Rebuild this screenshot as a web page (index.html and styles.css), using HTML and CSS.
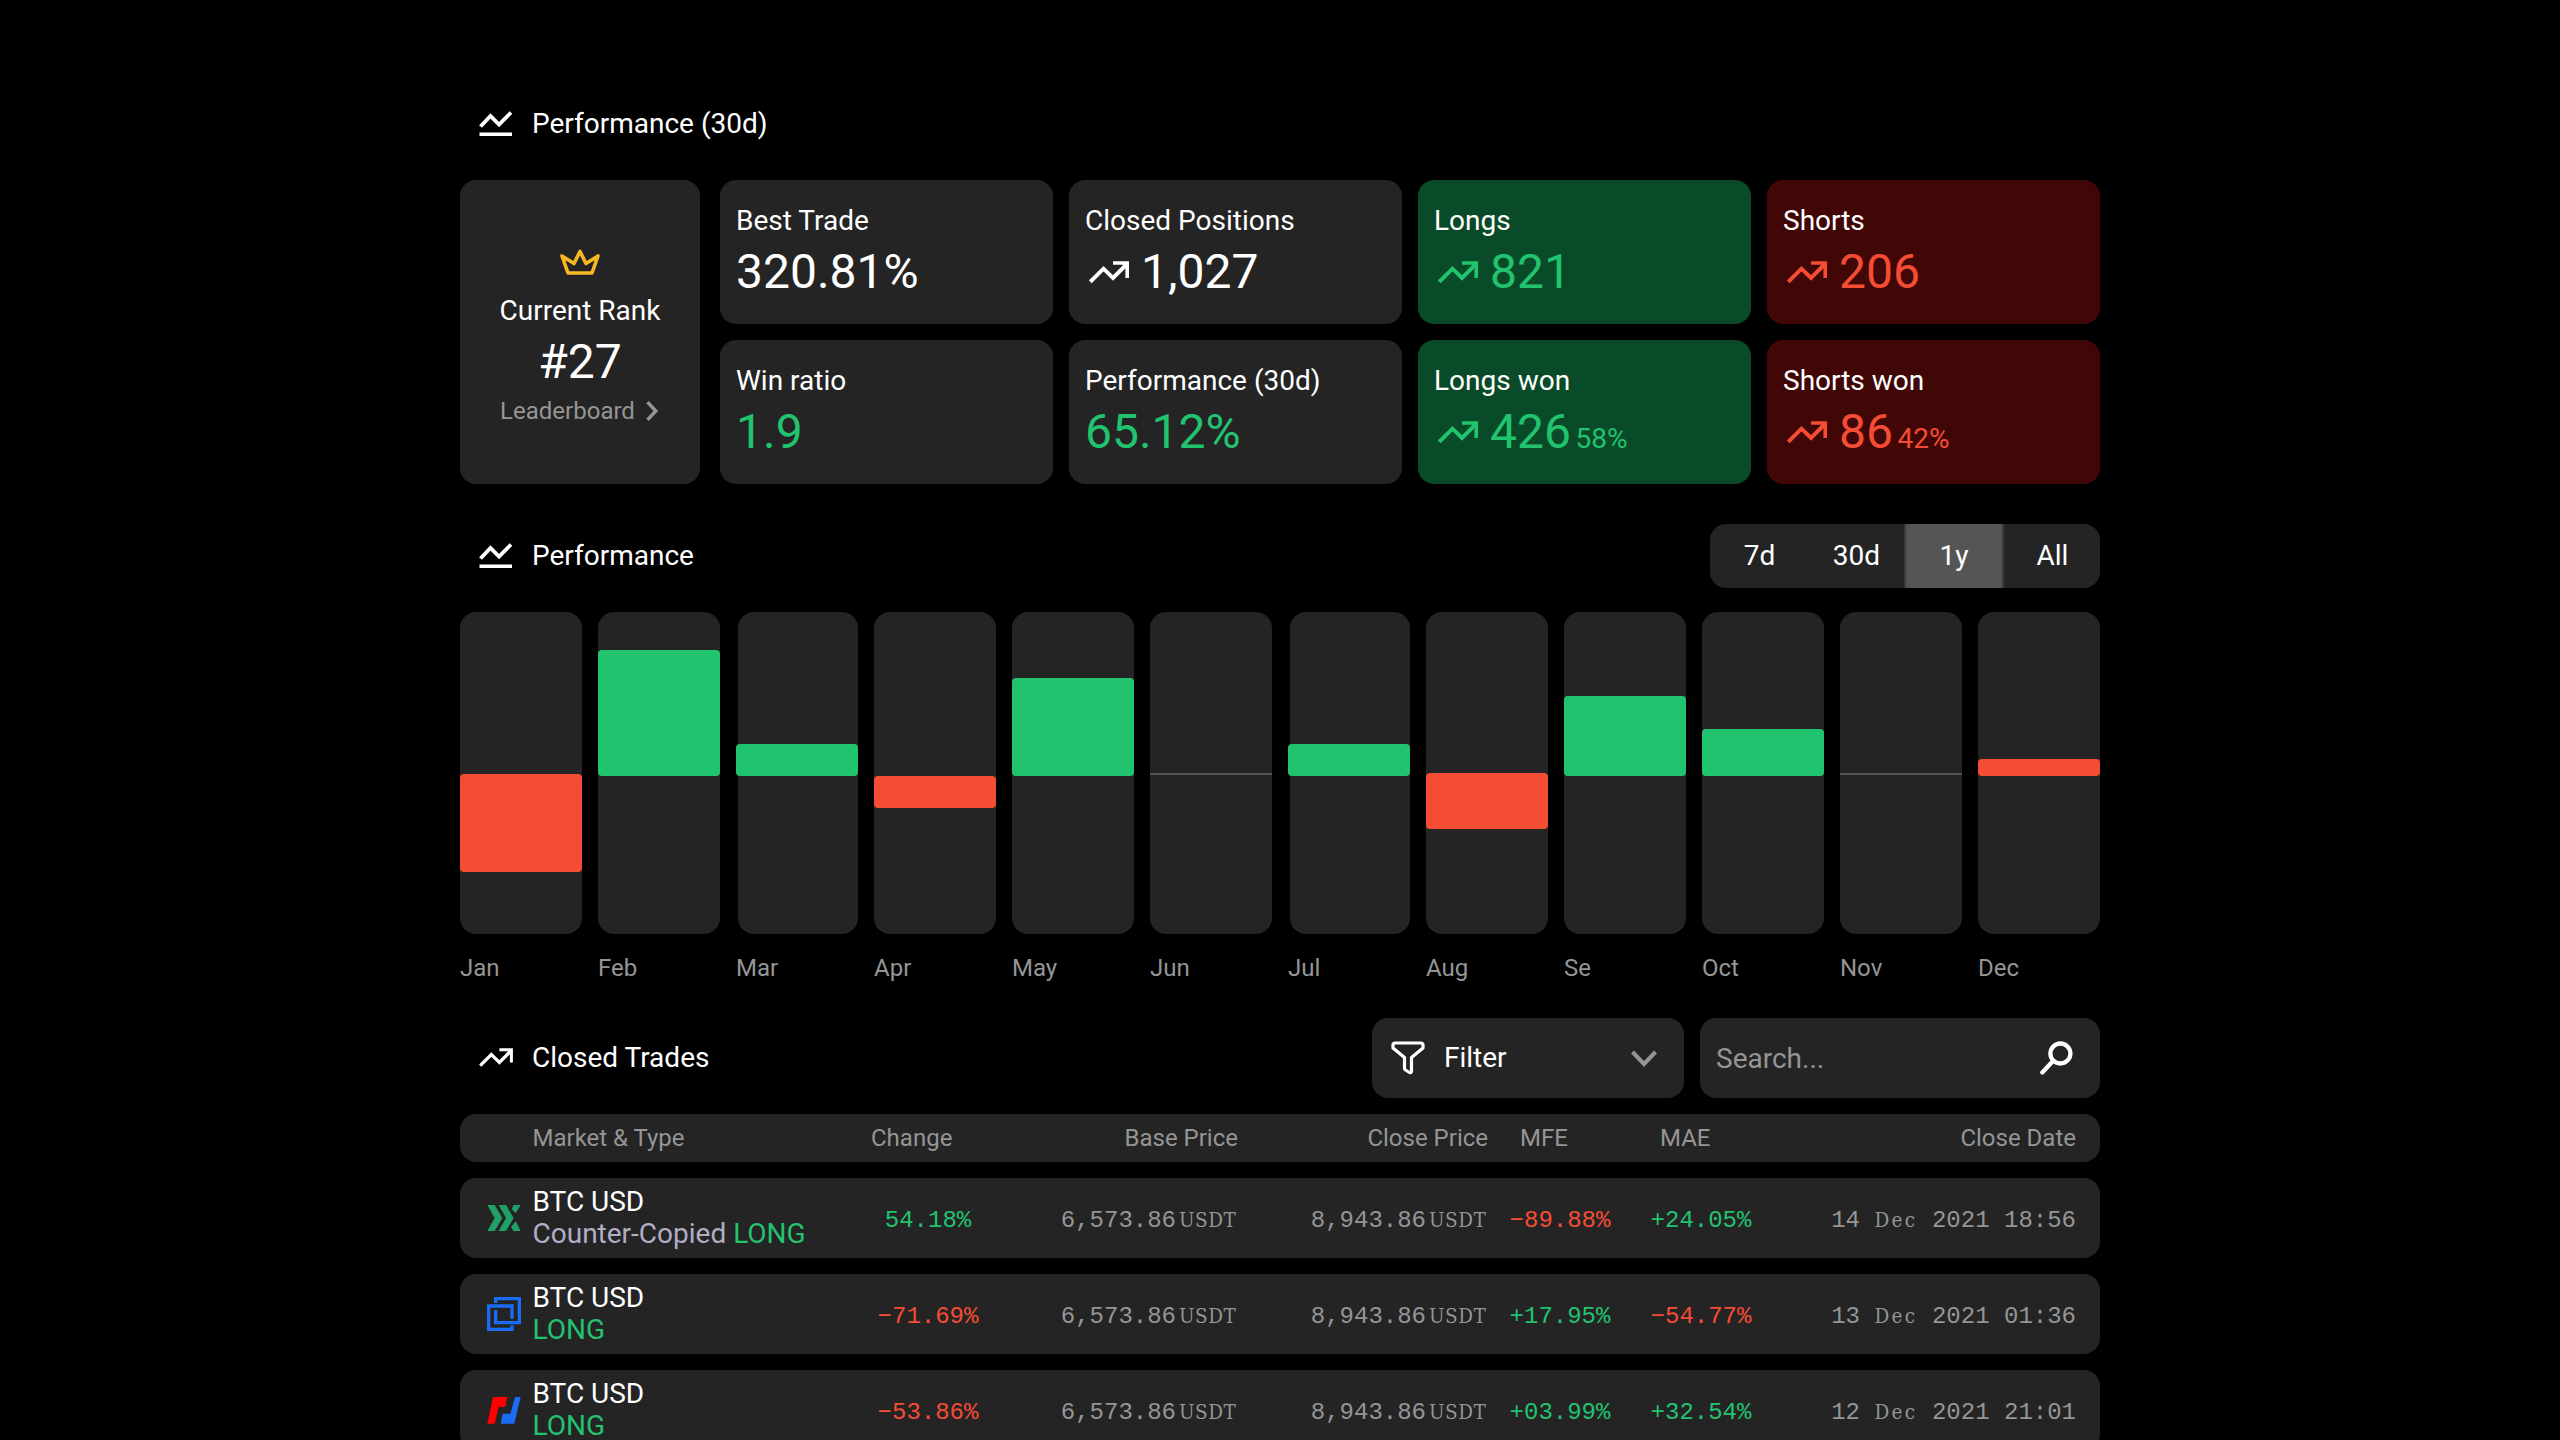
FILE: index.html
```html
<!DOCTYPE html>
<html lang="en">
<head>
<meta charset="utf-8">
<title>Performance</title>
<link rel="stylesheet" href="styles.css">
</head>
<body>
<svg class="defs" width="0" height="0">
  <symbol id="chart" viewBox="0 0 34 26"><path d="M1.5 15.500L11.500 5L20 13.500L32 1.500" fill="none" stroke="currentColor" stroke-width="3.800"/><path d="M0.500 23.300H33" stroke="currentColor" stroke-width="3.400"/></symbol>
  <symbol id="trend" viewBox="0 0 40 23"><path d="M1.300 20.800L14.500 7.700L24 17L37.500 3.500" fill="none" stroke="currentColor" stroke-width="3.900"/><path d="M24 2H38.200V17" fill="none" stroke="currentColor" stroke-width="3.600"/><path d="M32 2H38V8Z" fill="currentColor"/></symbol>
</svg>
<main class="page">
  <header class="section-title first"><svg class="chart-icon"><use href="#chart"/></svg><h2>Performance (30d)</h2></header>

  <section class="stats">
    <article class="card rank">
      <svg class="crown" viewBox="0 0 42 28"><path d="M21 3.500L27 15.500L39 8L33 25H9L3 8L15 15.500Z" fill="none" stroke="currentColor" stroke-width="3.600" stroke-linejoin="round"/></svg>
      <span class="label">Current Rank</span>
      <span class="value">#27</span>
      <a class="board">Leaderboard<svg class="next" viewBox="0 0 12 20"><path d="M1.500 1.200L9.800 10L1.500 18.800" fill="none" stroke="currentColor" stroke-width="3.400"/></svg></a>
    </article>
    <article class="card"><span class="label">Best Trade</span><span class="value">320.81%</span></article>
    <article class="card"><span class="label">Closed Positions</span><span class="value"><svg class="trend"><use href="#trend"/></svg>1,027</span></article>
    <article class="card long"><span class="label">Longs</span><span class="value up"><svg class="trend"><use href="#trend"/></svg>821</span></article>
    <article class="card short"><span class="label">Shorts</span><span class="value down"><svg class="trend"><use href="#trend"/></svg>206</span></article>
    <article class="card"><span class="label">Win ratio</span><span class="value up">1.9</span></article>
    <article class="card"><span class="label">Performance (30d)</span><span class="value up">65.12%</span></article>
    <article class="card long"><span class="label">Longs won</span><span class="value up"><svg class="trend"><use href="#trend"/></svg>426<small>58%</small></span></article>
    <article class="card short"><span class="label">Shorts won</span><span class="value down"><svg class="trend"><use href="#trend"/></svg>86<small>42%</small></span></article>
  </section>

  <header class="section-title range">
    <svg class="chart-icon"><use href="#chart"/></svg><h2>Performance</h2>
    <nav class="tabs"><span>7d</span><span>30d</span><span class="active">1y</span><span>All</span></nav>
  </header>

  <section class="months">
    <div class="month"><div class="track"><i class="bar loss" style="margin-top:162px;height:98px"></i></div>Jan</div>
    <div class="month"><div class="track"><i class="bar gain" style="margin-top:38px;height:126px"></i></div>Feb</div>
    <div class="month"><div class="track inset"><i class="bar gain" style="margin-top:132px;height:32px"></i></div>Mar</div>
    <div class="month"><div class="track"><i class="bar loss" style="margin-top:164px;height:32px"></i></div>Apr</div>
    <div class="month"><div class="track"><i class="bar gain" style="margin-top:66px;height:98px"></i></div>May</div>
    <div class="month"><div class="track"><i class="bar none"></i></div>Jun</div>
    <div class="month"><div class="track inset"><i class="bar gain" style="margin-top:132px;height:32px"></i></div>Jul</div>
    <div class="month"><div class="track"><i class="bar loss" style="margin-top:161px;height:56px"></i></div>Aug</div>
    <div class="month"><div class="track"><i class="bar gain" style="margin-top:84px;height:79.500px"></i></div>Se</div>
    <div class="month"><div class="track"><i class="bar gain" style="margin-top:116.500px;height:47px"></i></div>Oct</div>
    <div class="month"><div class="track"><i class="bar none"></i></div>Nov</div>
    <div class="month"><div class="track"><i class="bar loss" style="margin-top:146.500px;height:17px"></i></div>Dec</div>
  </section>

  <header class="section-title trades-title">
    <svg class="trend small" viewBox="0 0 40 23"><use href="#trend" width="40" height="23"/></svg><h2>Closed Trades</h2>
    <div class="filter"><svg class="funnel" viewBox="0 0 34 34"><path d="M4 2H30Q32 2 32 4V7L20.500 16.500V30Q20.500 32 18.500 31.500L14.500 29Q13.500 28.300 13.500 27V16.500L2 7V4Q2 2 4 2Z" fill="none" stroke="currentColor" stroke-width="3.200" stroke-linejoin="round"/></svg><span>Filter</span><svg class="caret" viewBox="0 0 26 17"><path d="M1.500 2L13 14L24.500 2" fill="none" stroke="currentColor" stroke-width="4"/></svg></div>
    <div class="search"><span>Search...</span><svg class="lens" viewBox="0 0 34 34"><circle cx="21.400" cy="12.500" r="10" fill="none" stroke="currentColor" stroke-width="4.300"/><path d="M14 20L3.300 31.500" stroke="currentColor" stroke-width="4.200" stroke-linecap="round"/></svg></div>
  </header>

  <section class="table">
    <div class="row head"><span></span><span>Market &amp; Type</span><span class="h-change">Change</span><span class="end">Base Price</span><span class="end">Close Price</span><span class="h-mfe">MFE</span><span class="h-mae">MAE</span><span class="end">Close Date</span></div>
    <div class="row">
      <svg class="logo" viewBox="0 0 102 102"><path fill="#1fa067" d="M1 12H23L46 51L23 90H1L23 51ZM35 12H57L80 51L57 90H35L57 51ZM80 12H101L86 36L74 25ZM86 61L101 90H79L72 78Z"/></svg>
      <div class="market">BTC USD<br><em>Counter-Copied</em> <b class="up">LONG</b></div>
      <span class="num up">54.18%</span><span class="num price">6,573.86<span class="unit">USDT</span></span><span class="num price">8,943.86<span class="unit">USDT</span></span><span class="num down">−89.88%</span><span class="num up">+24.05%</span><span class="num date">14 <span class="mon">Dec</span> 2021 18:56</span>
    </div>
    <div class="row">
      <svg class="logo" viewBox="0 0 102 102"><path fill="none" stroke="#1a6cf5" stroke-width="10" d="M26 18V5H97V77H26V39M75 65V27H5V97H75V85"/></svg>
      <div class="market">BTC USD<br><b class="up">LONG</b></div>
      <span class="num down">−71.69%</span><span class="num price">6,573.86<span class="unit">USDT</span></span><span class="num price">8,943.86<span class="unit">USDT</span></span><span class="num up">+17.95%</span><span class="num down">−54.77%</span><span class="num date">13 <span class="mon">Dec</span> 2021 01:36</span>
    </div>
    <div class="row">
      <svg class="logo" viewBox="0 0 102 102"><path fill="#f00" d="M18 12H61L55 42H35L23 92H1Z"/><path fill="#1a6cf5" d="M84 12H101L82 92H41L47 62H70Z"/></svg>
      <div class="market">BTC USD<br><b class="up">LONG</b></div>
      <span class="num down">−53.86%</span><span class="num price">6,573.86<span class="unit">USDT</span></span><span class="num price">8,943.86<span class="unit">USDT</span></span><span class="num up">+03.99%</span><span class="num up">+32.54%</span><span class="num date">12 <span class="mon">Dec</span> 2021 21:01</span>
    </div>
  </section>
</main>
</body>
</html>
```
FILE: styles.css
```css
* { box-sizing: border-box; }
html, body { margin: 0; height: 100%; overflow: hidden; background: #000; }
body { color: #fff; font: 28px/32px Roboto, "Liberation Sans", sans-serif; }
svg { display: block; flex: none; }
.defs { position: absolute; }
.page { width: 1640px; margin: 0 auto; padding-top: 96px; }
.up { color: #21c36f; }
.down { color: #f54c34; }

.section-title { display: flex; align-items: center; height: 56px; padding-left: 19px; }
.section-title h2 { margin: 0; font-size: 28px; font-weight: 400; }
.first { margin-bottom: 28px; }
.chart-icon { width: 34px; height: 26px; margin-right: 19px; }

.stats { display: grid; grid-template-columns: 244px repeat(4, 333px); grid-template-rows: 144px 144px; gap: 16px; }
.card { display: flex; flex-direction: column; padding: 25px 16px 23px; border-radius: 16px; background: #242424; }
.stats .rank { grid-row: 1 / 3; align-items: center; width: 240px; padding: 68px 0 0; }
.long { background: #094b28; }
.short { background: #410707; }
.value { display: flex; align-items: baseline; margin-top: 7px; font-size: 48px; line-height: 56px; }
.trend { width: 40px; height: 23px; margin: 0 12px 0 4px; align-self: flex-start; margin-top: 17px; }
.value small { margin-left: 4.500px; font-size: 28px; }
.crown { width: 42px; height: 28px; margin-bottom: 19px; color: #f8b823; }
.board { display: flex; align-items: center; gap: 11px; margin: 5px 2px 0 0; color: #959595; font-size: 24px; }
.rank .value { margin-top: 7px; }
.next { width: 12px; height: 20px; }

.range { height: 64px; margin-top: 40px; }
.tabs { display: flex; margin-left: auto; width: 390px; height: 64px; border-radius: 16px; overflow: hidden; background: #242424; line-height: 64px; text-align: center; }
.tabs span { width: 98px; padding-left: 1px; }
.tabs span:nth-child(2) { width: 96px; }
.tabs .active { width: 100px; padding: 0; border: solid #3b3b3b; border-width: 0 2px; background: #555; }
.tabs span:last-child { width: 96px; }

.months { display: grid; grid-template-columns: repeat(12, 122px); gap: 16px; margin-top: 24px; color: #959595; font-size: 24px; }
.track { height: 322px; margin-bottom: 18px; border-radius: 16px; background: #242424; display: flow-root; }
.track.inset { margin-left: 2px; }
.inset .bar { margin-left: -2px; }
.bar { display: block; border-radius: 4px; }
.gain { background: #21c36f; }
.loss { background: #f54c34; }
.none { height: 2px; margin-top: 161px; border-radius: 0; background: #555; }

.trades-title { height: 80px; margin-top: 34px; }
.trend.small { width: 34px; height: 19.500px; margin: 0 19px 0 0; align-self: center; }
.filter, .search { display: flex; align-items: center; height: 80px; border-radius: 16px; background: #242424; }
.filter { width: 312px; margin-left: auto; padding: 0 27px 0 19px; }
.funnel { width: 34px; height: 34px; margin-right: 19px; }
.caret { width: 26px; height: 17px; margin-left: auto; color: #959595; }
.search { width: 400px; margin-left: 16px; padding: 1px 27px 0 16px; color: #959595; }
.lens { width: 34px; height: 34px; margin: -2px 0 0 auto; color: #fff; }

.table { display: grid; gap: 16px; margin-top: 16px; }
.row { display: grid; grid-template-columns: 72.500px 331.500px 128px 246px 250px 144px 138px 1fr; align-items: center; height: 80px; padding-right: 24px; border-radius: 16px; background: #242424; white-space: nowrap; }
.head { height: 48px; color: #959595; font-size: 24px; }
.end { text-align: right; }
.h-change { padding-left: 7px; }
.h-mfe { padding-left: 32px; }
.h-mae { padding-left: 28px; }
.logo { width: 34px; height: 34px; margin-left: 27px; }
.market em { color: #b1adc5; font-style: normal; }
.market b { font-weight: 400; }
.num { padding-top: 5px; font-family: "Liberation Mono", monospace; font-size: 24px; text-align: center; }
.price, .date { color: #959595; text-align: right; }
.price { padding-right: 1px; }
.unit, .mon { display: inline-block; font-family: "DejaVu Serif Condensed", "DejaVu Serif", serif; font-size: 20.500px; font-stretch: condensed; line-height: 20px; text-align: left; }
.unit { width: 58px; margin-left: 3px; letter-spacing: 0.500px; }
.mon { width: 43.200px; letter-spacing: 2.300px; }
```
